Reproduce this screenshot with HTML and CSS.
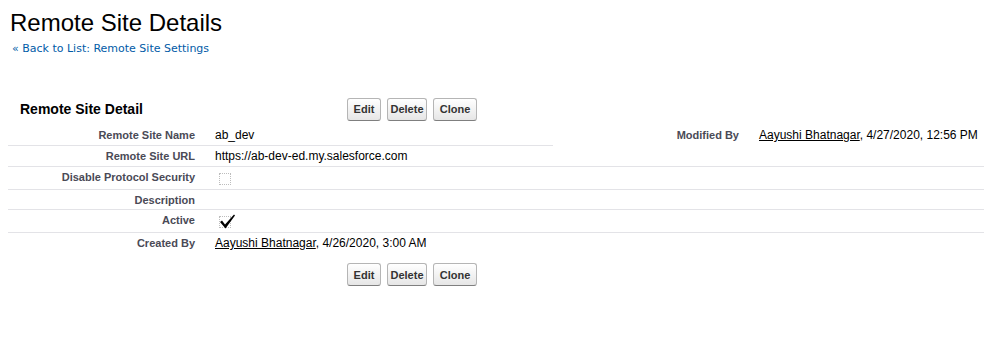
FILE: index.html
```html
<!DOCTYPE html>
<html lang="en">
<head>
<meta charset="utf-8">
<title>Remote Site Details</title>
<link rel="stylesheet" href="styles.css">
</head>
<body>
<div class="page">
  <h1 class="page-title">Remote Site Details</h1>
  <a class="back-link" href="#">« Back to List: Remote Site Settings</a>

  <div class="block">
    <div class="block-header">
      <h2 class="block-title">Remote Site Detail</h2>
      <div class="buttons">
        <button class="btn btn-edit">Edit</button>
        <button class="btn btn-delete">Delete</button>
        <button class="btn btn-clone">Clone</button>
      </div>
    </div>

    <table class="detail">
      <colgroup>
        <col class="c-label1">
        <col class="c-data1">
        <col class="c-label2">
        <col class="c-data2">
      </colgroup>
      <tbody>
        <tr>
          <td class="label">Remote Site Name</td>
          <td class="data">ab_dev</td>
          <td class="label" rowspan="2">Modified By</td>
          <td class="data" rowspan="2"><a class="user" href="#">Aayushi Bhatnagar</a>, 4/27/2020, 12:56 PM</td>
        </tr>
        <tr>
          <td class="label">Remote Site URL</td>
          <td class="data">https://ab-dev-ed.my.salesforce.com</td>
        </tr>
        <tr>
          <td class="label">Disable Protocol Security</td>
          <td class="data" colspan="3"><span class="check"></span></td>
        </tr>
        <tr>
          <td class="label">Description</td>
          <td class="data" colspan="3"></td>
        </tr>
        <tr>
          <td class="label">Active</td>
          <td class="data" colspan="3"><span class="check checked"><svg class="tick" width="16" height="16" viewBox="0 0 16 16"><polygon points="0,8 2,6.5 5,10.5 14,0.5 15,1.5 5.5,14.5" fill="#000"/></svg></span></td>
        </tr>
        <tr class="last">
          <td class="label">Created By</td>
          <td class="data" colspan="3"><a class="user" href="#">Aayushi Bhatnagar</a>, 4/26/2020, 3:00 AM</td>
        </tr>
      </tbody>
    </table>

    <div class="block-footer">
      <div class="buttons">
        <button class="btn btn-edit">Edit</button>
        <button class="btn btn-delete">Delete</button>
        <button class="btn btn-clone">Clone</button>
      </div>
    </div>
  </div>
</div>
</body>
</html>
```

FILE: styles.css
```css
html, body {
  margin: 0;
  padding: 0;
  background: #fff;
}

.page {
  padding-left: 8px;
  font-family: Arial, "Liberation Sans", sans-serif;
  color: #000;
}

.page-title {
  margin: 9px 0 0 2px;
  font-size: 24px;
  line-height: 28px;
  font-weight: normal;
  color: #000;
}

.back-link {
  display: block;
  margin: 5px 0 0 4px;
  font-family: Verdana, "DejaVu Sans", sans-serif;
  font-size: 11px;
  line-height: 13px;
  color: #015ba7;
  text-decoration: none;
}

.block {
  margin-top: 38px;
}

.block-header {
  display: flex;
  align-items: center;
  height: 32px;
}

.block-title {
  box-sizing: border-box;
  width: 339px;
  margin: 0;
  padding-left: 12px;
  font-size: 14px;
  line-height: 17px;
  font-weight: bold;
  color: #000;
}

.buttons {
  display: flex;
  gap: 6px;
}

.btn {
  box-sizing: border-box;
  height: 23px;
  padding: 0;
  text-align: center;
  font-family: Arial, "Liberation Sans", sans-serif;
  font-size: 11px;
  font-weight: bold;
  color: #333;
  background: linear-gradient(#ffffff, #e6e6e6);
  border: 1px solid #b5b5b5;
  border-bottom-color: #7f7f7f;
  border-radius: 3px;
}

.btn-edit { width: 34px; }
.btn-delete { width: 40px; }
.btn-clone { width: 44px; }

.detail {
  width: 976px;
  border-collapse: collapse;
  table-layout: fixed;
}

.c-label1 { width: 197px; }
.c-data1 { width: 348px; }
.c-label2 { width: 196px; }
.c-data2 { width: 235px; }

.detail td {
  padding: 3px 0;
  border-bottom: 1px solid #e3e3e7;
  vertical-align: top;
}

.detail tr.last td {
  border-bottom: none;
}

.detail .label {
  padding-right: 10px;
  padding-top: 4px;
  text-align: right;
  font-size: 11px;
  line-height: 12px;
  font-weight: bold;
  color: #4a4a56;
}

.detail .data {
  padding-left: 10px;
  font-size: 12px;
  line-height: 14px;
  color: #000;
}

.user {
  color: #000;
  text-decoration: underline;
}

.check {
  position: relative;
  display: block;
  box-sizing: border-box;
  width: 12px;
  height: 12px;
  margin: 3px 0 1px 4px;
  border: 1px dotted #bdbdbd;
}

.tick {
  position: absolute;
  left: 0;
  top: -3px;
}

.block-footer {
  padding: 10px 0 0 339px;
}
```
